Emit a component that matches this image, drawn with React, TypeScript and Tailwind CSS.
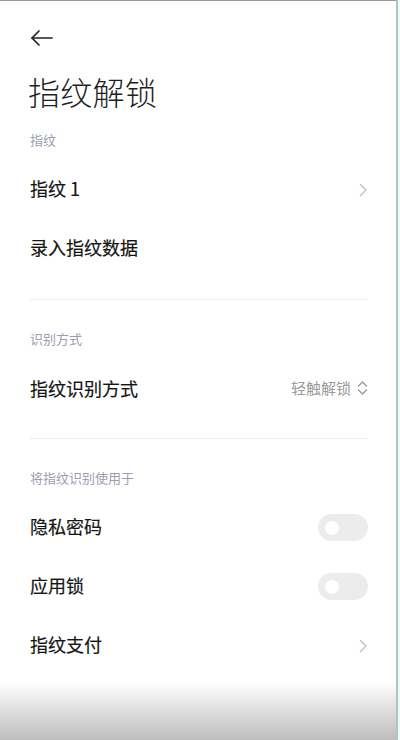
import React from "react";

const font = { fontFamily: '"Noto Sans CJK SC", "Noto Sans", sans-serif' };

function Chevron() {
  return (
    <svg width="9" height="14" viewBox="0 0 9 14" fill="none">
      <path d="M1.5 1.5 L7 7 L1.5 12.5" stroke="#c4c4c4" strokeWidth="1.5" strokeLinecap="round" strokeLinejoin="round" />
    </svg>
  );
}

function UpDown() {
  return (
    <svg width="11" height="16" viewBox="0 0 11 16" fill="none">
      <path d="M1.5 6 L5.5 2 L9.5 6" stroke="#9a9a9a" strokeWidth="1.4" strokeLinecap="round" strokeLinejoin="round" />
      <path d="M1.5 10 L5.5 14 L9.5 10" stroke="#9a9a9a" strokeWidth="1.4" strokeLinecap="round" strokeLinejoin="round" />
    </svg>
  );
}

function Toggle() {
  return (
    <div className="w-[50px] h-[27px] rounded-full bg-[#ececec] flex items-center pl-[7px]">
      <div className="w-[14px] h-[14px] rounded-full bg-white" />
    </div>
  );
}

function SectionLabel({ text, h, pb }: { text: string; h: string; pb: string }) {
  return (
    <div className={`flex items-end ${h} ${pb}`}>
      <span className="text-[13px] leading-[20px] text-[#9a9eb0]">{text}</span>
    </div>
  );
}

function Row({ label, right }: { label: string; right?: React.ReactNode }) {
  return (
    <div className="h-[59px] flex items-center justify-between">
      <span className="text-[18px] font-normal text-[#151515] leading-[24px] -mt-[3px] [-webkit-text-stroke:0.2px_#151515]">{label}</span>
      {right}
    </div>
  );
}

export default function App() {
  return (
    <div className="w-[400px] h-[740px] flex bg-white overflow-hidden" style={font}>
      <div className="flex-1 flex flex-col relative">
        <div className="h-px bg-[#9a9a9a]" />
        <div className="pl-[30px] pr-[28px] flex flex-col">
          <div className="h-[71px] flex items-center">
            <svg width="24" height="18" viewBox="0 0 24 18" fill="none" className="mt-[2px]">
              <path d="M9 2 L2 9 L9 16" stroke="#222" strokeWidth="1.7" strokeLinecap="round" strokeLinejoin="round" />
              <path d="M2 9 H22" stroke="#222" strokeWidth="1.7" strokeLinecap="round" />
            </svg>
          </div>
          <div className="h-[40px] flex items-center -ml-[2px]">
            <span className="text-[32px] font-light text-[#1f1f1f] leading-[40px] tracking-[0.3px] -mt-[3px]">指纹解锁</span>
          </div>
          <SectionLabel text="指纹" h="h-[48px]" pb="pb-[10px]" />
          <Row label="指纹 1" right={<Chevron />} />
          <Row label="录入指纹数据" />
          <div className="mt-[21px] h-px bg-[#ececec]" />
          <SectionLabel text="识别方式" h="h-[60px]" pb="pb-[11px]" />
          <Row
            label="指纹识别方式"
            right={
              <div className="flex items-center gap-[6px] -mt-[3px]">
                <span className="text-[15px] text-[#9a9a9a]">轻触解锁</span>
                <UpDown />
              </div>
            }
          />
          <div className="mt-[19px] h-px bg-[#ececec]" />
          <SectionLabel text="将指纹识别使用于" h="h-[59px]" pb="pb-[10px]" />
          <Row label="隐私密码" right={<Toggle />} />
          <Row label="应用锁" right={<Toggle />} />
          <Row label="指纹支付" right={<Chevron />} />
        </div>
        <div className="flex-1 mt-[7px] bg-gradient-to-b from-white to-[#bdbdbd]" />
      </div>
      <div className="w-[2px] bg-[#a8c6c6]" />
      <div className="w-[2px] bg-[#f4f8f8]" />
    </div>
  );
}
